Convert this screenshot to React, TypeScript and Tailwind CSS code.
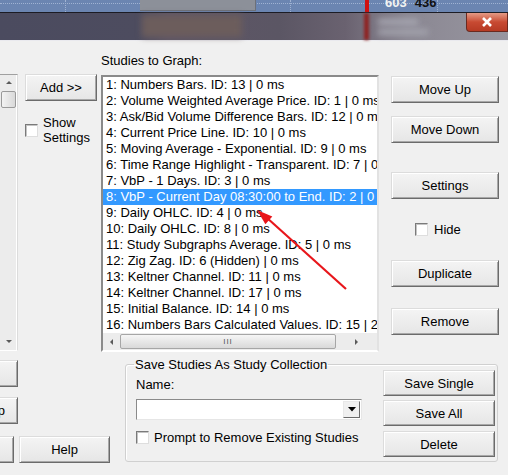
import React from "react";

const studies = [
  "1: Numbers Bars. ID: 13 | 0 ms",
  "2: Volume Weighted Average Price. ID: 1 | 0 ms",
  "3: Ask/Bid Volume Difference Bars. ID: 12 | 0 ms",
  "4: Current Price Line. ID: 10 | 0 ms",
  "5: Moving Average - Exponential. ID: 9 | 0 ms",
  "6: Time Range Highlight - Transparent. ID: 7 | 0 ms",
  "7: VbP - 1 Days. ID: 3 | 0 ms",
  "8: VbP - Current Day 08:30:00 to End. ID: 2 | 0 ms",
  "9: Daily OHLC. ID: 4 | 0 ms",
  "10: Daily OHLC. ID: 8 | 0 ms",
  "11: Study Subgraphs Average. ID: 5 | 0 ms",
  "12: Zig Zag. ID: 6 (Hidden) | 0 ms",
  "13: Keltner Channel. ID: 11 | 0 ms",
  "14: Keltner Channel. ID: 17 | 0 ms",
  "15: Initial Balance. ID: 14 | 0 ms",
  "16: Numbers Bars Calculated Values. ID: 15 | 2 ms",
];

function Btn({ children, className = "" }: { children?: React.ReactNode; className?: string }) {
  return (
    <div
      className={`flex shrink-0 items-center justify-center overflow-hidden whitespace-nowrap border border-b-[#6b6b6b] border-l-[#dcdcdc] border-r-[#6b6b6b] border-t-[#dcdcdc] bg-gradient-to-b from-[#f4f4f4] to-[#e6e6e6] shadow-[inset_1px_1px_0_#ffffff,inset_-1px_-1px_0_#a8a8a8] ${className}`}
    >
      {children}
    </div>
  );
}

function Check() {
  return (
    <div className="h-[13px] w-[13px] shrink-0 border border-b-[#dedede] border-l-[#7a7a7a] border-r-[#dedede] border-t-[#7a7a7a] bg-white shadow-[inset_1px_1px_0_#c4c4c4]" />
  );
}

function Arrow({ dir }: { dir: "up" | "down" | "left" | "right" }) {
  const pts = {
    up: "1,5 4,2 7,5",
    down: "1,2 4,5 7,2",
    left: "5,1 2,4 5,7",
    right: "2,1 5,4 2,7",
  }[dir];
  return (
    <svg width="8" height="8" viewBox="0 0 8 8">
      <polygon points={pts} fill="#5a5a5a" />
    </svg>
  );
}

export default function App() {
  return (
    <div
      className="relative h-[475px] w-[508px] overflow-hidden bg-[#f0f0f0] text-[13px] leading-[15px] text-black"
      style={{ fontFamily: '"Liberation Sans", Arial, sans-serif' }}
    >
      {/* chart strip behind the dialog */}
      <div className="relative h-[13px] overflow-hidden border-b border-[#1c1c24] bg-[#6b85b1]">
        <div className="absolute left-0 right-0 top-[3px] border-t border-dotted border-[#9fb2d2]" />
        <div className="absolute bottom-0 left-[65px] top-0 border-l border-dotted border-[#9fb2d2]" />
        <div className="absolute bottom-0 left-[290px] top-0 border-l border-dotted border-[#9fb2d2]" />
        <div className="absolute bottom-0 left-[437px] top-0 border-l border-dotted border-[#9fb2d2]" />
        <div className="absolute left-[140px] top-0 h-[11px] w-[116px] border-b border-r border-[#6c7079] bg-[#8c9099]" />
        <div className="absolute left-[365px] top-0 h-[13px] w-[4px] bg-[#d01010]" />
        <div className="absolute left-[385px] top-[-4px] flex gap-[8px] text-[13px] font-bold leading-[13px]">
          <span className="text-[#f2f2f2]">603</span>
          <span className="text-[#111]">436</span>
        </div>
      </div>

      {/* blurred title bar */}
      <div className="relative flex h-[28px] justify-end border-b border-[#e9e9ee] bg-[linear-gradient(to_right,#4b4b5f_0%,#4d4c5f_27%,#5d5566_33%,#5b5664_55%,#6a6270_68%,#8a8792_80%,#9896a0_100%)]">
        <div className="absolute left-[142px] top-[2px] h-[22px] w-[100px] bg-[#6c5d5c] blur-[3px]" />
        <div className="absolute left-[364px] top-0 h-[27px] w-[5px] bg-[#8e2424] blur-[1.5px]" />
        <div className="absolute left-[378px] top-[6px] h-[6px] w-[40px] bg-[#a8a8b2] blur-[3px]" />
        <div className="absolute left-[378px] top-[16px] h-[6px] w-[50px] bg-[#a4a4ae] blur-[3px]" />
        <div className="relative flex h-[19px] w-[42px] items-center justify-center rounded-bl-[4px] border border-t-0 border-[#6a2a20] bg-gradient-to-b from-[#e39a86] via-[#c84a32] to-[#b63a24]">
          <svg width="12" height="10" viewBox="0 0 12 10">
            <path d="M2 1 L10 9 M10 1 L2 9" stroke="#ffffff" strokeWidth="2.6" />
          </svg>
        </div>
      </div>

      {/* dialog body */}
      <div className="flex flex-col">
        {/* upper part */}
        <div className="flex h-[311px] items-start">
          {/* cut-off list on the left */}
          <div className="mt-[33px] flex h-[277px] w-[18px] flex-col border-b border-r border-t border-b-white border-r-[#dcdcdc] border-t-[#a0a0a0] bg-[#ececec] shadow-[inset_-1px_0_0_#ffffff]">
            <div className="flex h-[16px] items-center justify-center">
              <Arrow dir="up" />
            </div>
            <div className="mx-auto h-[17px] w-[15px] rounded-[2px] border border-[#9a9a9a] bg-gradient-to-r from-[#f3f3f3] to-[#d9d9d9]" />
            <div className="flex-1" />
            <div className="flex h-[16px] items-center justify-center">
              <Arrow dir="down" />
            </div>
          </div>

          {/* Add >> / Show Settings */}
          <div className="ml-[7px] flex w-[72px] flex-col">
            <Btn className="mt-[33px] h-[27px] w-[72px]">Add &gt;&gt;</Btn>
            <div className="mt-[14px] flex items-center gap-[5px]">
              <Check />
              <div>
                Show
                <br />
                Settings
              </div>
            </div>
          </div>

          {/* Studies list */}
          <div className="ml-[4px] flex flex-col pt-[12px]">
            <div>Studies to Graph:</div>
            <div className="mt-[7px] flex h-[277px] w-[278px] flex-col border-2 border-b-[#ffffff] border-l-[#8a8a8a] border-r-[#e2e2e2] border-t-[#8a8a8a] bg-white">
              <div className="flex flex-col">
                {studies.map((s, i) => (
                  <div
                    key={s}
                    className={`h-[16px] overflow-hidden whitespace-nowrap pl-[3px] leading-[16px] ${i === 7 ? "bg-[#3399ff] text-white" : ""}`}
                  >
                    {s}
                  </div>
                ))}
              </div>
              <div className="mt-auto flex h-[17px] items-center bg-[#ececec]">
                <div className="flex w-[17px] justify-center">
                  <Arrow dir="left" />
                </div>
                <div className="flex h-[15px] w-[216px] items-center justify-center rounded-[2px] border border-[#a6a6a6] bg-gradient-to-b from-[#f6f6f6] to-[#d9d9d9] text-[8px] leading-[8px] tracking-[1px] text-[#555]">
                  III
                </div>
                <div className="flex flex-1 justify-center">
                  <Arrow dir="right" />
                </div>
              </div>
            </div>
          </div>

          {/* right buttons */}
          <div className="ml-[12px] flex w-[108px] flex-col">
            <Btn className="mt-[35px] h-[27px]">Move Up</Btn>
            <Btn className="mt-[13px] h-[27px]">Move Down</Btn>
            <Btn className="mt-[29px] h-[27px]">Settings</Btn>
            <div className="mt-[23px] flex items-center gap-[6px] pl-[24px]">
              <Check />
              <span>Hide</span>
            </div>
            <Btn className="mt-[23px] h-[27px]">Duplicate</Btn>
            <Btn className="mt-[21px] h-[27px]">Remove</Btn>
          </div>
        </div>

        {/* lower part */}
        <div className="flex items-start">
          <div className="flex w-[110px] flex-col">
            <Btn className="-ml-[62px] mt-[8px] h-[27px] w-[80px]" />
            <Btn className="-ml-[42px] mt-[10px] h-[27px] w-[60px]">Setup</Btn>
            <div className="mt-[12px] flex">
              <Btn className="-ml-[60px] h-[27px] w-[74px]" />
              <Btn className="ml-[5px] h-[27px] w-[91px]">Help</Btn>
            </div>
          </div>

          <fieldset className="ml-[15px] mt-[5px] h-[105px] w-[373px] rounded-[3px] border border-[#d0d0d0] shadow-[inset_1px_1px_0_#ffffff]">
            <legend className="ml-[8px] px-[1px]">Save Studies As Study Collection</legend>
            <div className="flex">
              <div className="flex flex-col pl-[10px]">
                <div className="mt-[5px]">Name:</div>
                <div className="mt-[7px] flex h-[21px] w-[226px] border border-b-[#e6e6e6] border-l-[#8a8a8a] border-r-[#e6e6e6] border-t-[#8a8a8a] bg-white">
                  <div className="flex-1" />
                  <div className="my-[1px] mr-[1px] flex w-[17px] items-center justify-center border border-b-[#6b6b6b] border-l-[#e8e8e8] border-r-[#6b6b6b] border-t-[#e8e8e8] bg-[#f0f0f0]">
                    <svg width="8" height="5" viewBox="0 0 8 5">
                      <polygon points="0,0 8,0 4,4.5" fill="#000" />
                    </svg>
                  </div>
                </div>
                <div className="mt-[10px] flex items-center gap-[5px]">
                  <Check />
                  <span>Prompt to Remove Existing Studies</span>
                </div>
              </div>
              <div className="-mt-[2px] ml-[21px] flex w-[112px] flex-col">
                <Btn className="h-[26px]">Save Single</Btn>
                <Btn className="mt-[4px] h-[26px]">Save All</Btn>
                <Btn className="mt-[5px] h-[26px]">Delete</Btn>
              </div>
            </div>
          </fieldset>
        </div>
      </div>

      {/* red annotation arrow */}
      <svg className="pointer-events-none absolute left-0 top-0" width="508" height="475">
        <line x1="346" y1="289" x2="266" y2="217" stroke="#e8161b" strokeWidth="2.2" />
        <polygon points="257,210 265.4,224.3 272.3,216.6" fill="#e8161b" />
      </svg>
    </div>
  );
}
